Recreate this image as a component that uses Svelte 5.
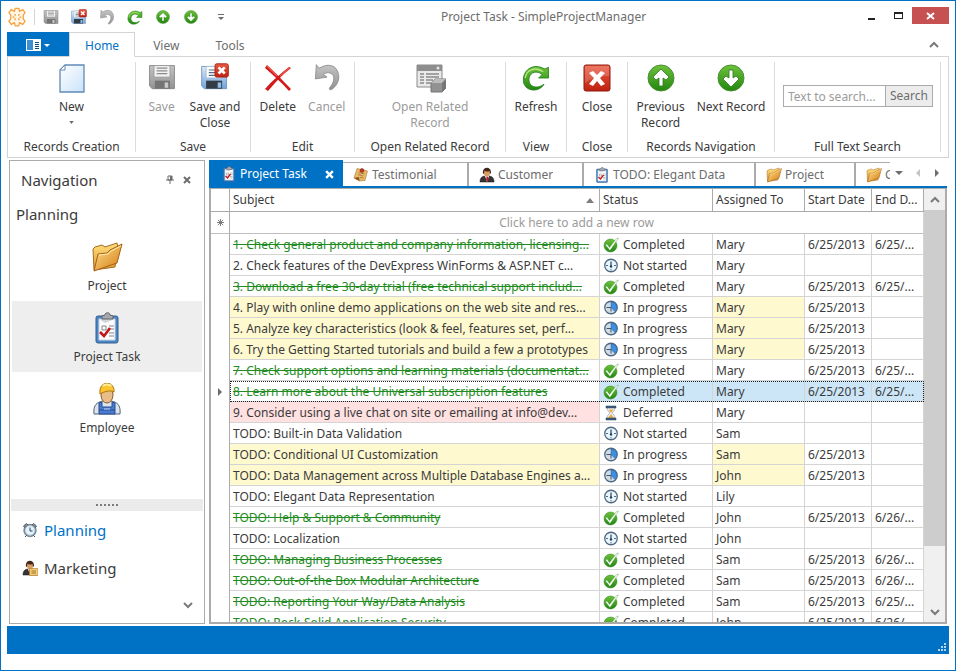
<script>
  const quickActions = [
    { icon: 'save', label: 'Save' },
    { icon: 'saveClose', label: 'Save and Close' },
    { icon: 'undo', label: 'Cancel' },
    { icon: 'refresh', label: 'Refresh' },
    { icon: 'up', label: 'Previous Record' },
    { icon: 'down', label: 'Next Record' }
  ];

  const ribbonGroups = [
    { id: 'creation', caption: 'Records Creation', items: [{ icon: 'doc', label: 'New', menu: true }] },
    {
      id: 'saving',
      caption: 'Save',
      items: [
        { icon: 'save', label: 'Save', disabled: true },
        { icon: 'saveClose', label: 'Save and\nClose' }
      ]
    },
    {
      id: 'edit',
      caption: 'Edit',
      items: [
        { icon: 'remove', label: 'Delete' },
        { icon: 'undo', label: 'Cancel', disabled: true }
      ]
    },
    {
      id: 'related',
      caption: 'Open Related Record',
      items: [{ icon: 'related', label: 'Open Related\nRecord', disabled: true }]
    },
    { id: 'view', caption: 'View', items: [{ icon: 'refresh', label: 'Refresh' }] },
    { id: 'closing', caption: 'Close', items: [{ icon: 'close', label: 'Close' }] },
    {
      id: 'records',
      caption: 'Records Navigation',
      items: [
        { icon: 'up', label: 'Previous\nRecord' },
        { icon: 'down', label: 'Next Record' }
      ]
    }
  ];

  const navItems = [
    { icon: 'folder', label: 'Project' },
    { icon: 'clipboard', label: 'Project Task' },
    { icon: 'worker', label: 'Employee' }
  ];

  const documents = [
    { id: 'testimonial', icon: 'note', label: 'Testimonial' },
    { id: 'customer', icon: 'person', label: 'Customer' },
    { id: 'todo', icon: 'clipboard', label: 'TODO: Elegant Data' },
    { id: 'project', icon: 'folder', label: 'Project' },
    { id: 'last', icon: 'folder', label: 'G' }
  ];

  const statuses = {
    done: { icon: 'check', label: 'Completed' },
    idle: { icon: 'clock', label: 'Not started' },
    progress: { icon: 'pie', label: 'In progress' },
    deferred: { icon: 'hourglass', label: 'Deferred' }
  };

  const tasks = [
    ['1. Check general product and company information, licensing...', 'done', 'Mary', '6/25/2013', '6/25/...'],
    ['2. Check features of the DevExpress WinForms & ASP.NET c...', 'idle', 'Mary', '', ''],
    ['3. Download a free 30-day trial (free technical support includ...', 'done', 'Mary', '6/25/2013', '6/25/...'],
    ['4. Play with online demo applications on the web site and res...', 'progress', 'Mary', '6/25/2013', ''],
    ['5. Analyze key characteristics (look & feel, features set, perf...', 'progress', 'Mary', '6/25/2013', ''],
    ['6. Try the Getting Started tutorials and build a few a prototypes', 'progress', 'Mary', '6/25/2013', ''],
    ['7. Check support options and learning materials (documentat...', 'done', 'Mary', '6/25/2013', '6/25/...'],
    ['8. Learn more about the Universal subscription features', 'done', 'Mary', '6/25/2013', '6/25/...'],
    ['9. Consider using a live chat on site or emailing at info@dev...', 'deferred', 'Mary', '', ''],
    ['TODO: Built-in Data Validation', 'idle', 'Sam', '', ''],
    ['TODO: Conditional UI Customization', 'progress', 'Sam', '6/25/2013', ''],
    ['TODO: Data Management across Multiple Database Engines a...', 'progress', 'John', '6/25/2013', ''],
    ['TODO: Elegant Data Representation', 'idle', 'Lily', '', ''],
    ['TODO: Help & Support & Community', 'done', 'John', '6/25/2013', '6/26/...'],
    ['TODO: Localization', 'idle', 'John', '', ''],
    ['TODO: Managing Business Processes', 'done', 'Sam', '6/25/2013', '6/26/...'],
    ['TODO: Out-of-the Box Modular Architecture', 'done', 'Sam', '6/25/2013', '6/26/...'],
    ['TODO: Reporting Your Way/Data Analysis', 'done', 'Sam', '6/25/2013', '6/25/...'],
    ['TODO: Rock-Solid Application Security', 'done', 'John', '6/25/2013', '6/26/...']
  ].map(([subject, status, owner, start, end]) => ({ subject, status, owner, start, end }));

  let activeNav = $state('Project Task');
  let selected = $state(7);
  let search = $state('');
</script>

{#snippet icon(name, box = '0 0 32 32')}
  <svg class="icon" viewBox={box} aria-hidden="true">
    {#if name === 'save'}
      <path d="M2 3h28v26H5l-3-3z" fill="url(#g-gray)" stroke="#858585" />
      <path d="M7 3h18v13H7z" fill="#f1f1f1" stroke="#999" />
      <path d="M10 6h12M10 9h12M10 12h12" stroke="#8c8c8c" stroke-width="1.4" />
      <path d="M8 20h17v9H8z" fill="#747474" />
      <path d="M19 22h4v6h-4z" fill="#c9c9c9" />
    {:else if name === 'saveClose'}
      <path d="M1 4h28v25H4l-3-3z" fill="url(#g-blue)" stroke="#7293b8" />
      <path d="M6 4h18v13H6z" fill="#fff" stroke="#a8bbd0" />
      <path d="M9 8h10M9 11h10M9 14h10" stroke="#5b6b7d" stroke-width="1.4" />
      <path d="M6 20h18v9H6z" fill="#333b44" />
      <path d="M19 22h4v6h-4z" fill="#8fbbe8" />
      <rect x="16" y="1" width="15" height="15" rx="2" fill="url(#g-red)" stroke="#a32014" />
      <path d="M20 5l7 7M27 5l-7 7" stroke="#fff" stroke-width="3" />
    {:else if name === 'undo'}
      <path d="M4 2l3 4c10-6 20-4 22 7 1 7-2 13-8 17-2 1-3-1-2-2 5-6 6-12 3-15-3-3-8-2-10 0l4 3-13 2z" fill="url(#g-gray)" stroke="#8d8d8d" />
    {:else if name === 'refresh'}
      <path d="M29 4v12H18l4-4c-8-6-15-1-15 6 0 8 9 11 17 5-5 9-20 9-23-2C-1 8 11-2 25 6z" fill="url(#g-green)" stroke="#24811c" transform="translate(1 1)" />
      <path d="M4 17c1-10 12-13 20-7" fill="none" stroke="#b8e67f" stroke-width="1.5" />
    {:else if name === 'up' || name === 'down'}
      <circle cx="16" cy="16" r="13" fill="url(#g-green)" stroke="#4a8f2f" />
      <path
        d="M16 7l8 8-3 3-3-2v8h-4v-8l-3 2-3-3z"
        fill="#fff"
        stroke="#2b7a1b"
        stroke-width=".8"
        transform={name === 'down' ? 'rotate(180 16 16)' : undefined}
      />
    {:else if name === 'doc'}
      <path d="M9 3h19v27H4V8z" fill="url(#g-paper)" stroke="#6289b5" stroke-width="1.3" />
      <path d="M4 8h5V3z" fill="#fff" stroke="#6289b5" />
    {:else if name === 'remove'}
      <path d="M5 3c8 7 15 15 24 24l-2 2C19 20 11 13 3 6z" fill="#d31919" />
      <path d="M27 5l2 1C20 13 14 20 6 29l-3-2C11 18 19 11 27 5z" fill="#d31919" />
      <path d="M5 4l10 10M27 6L18 14" stroke="#f05a50" stroke-width="1.2" />
    {:else if name === 'related'}
      <path d="M3 3h25v22H3z" fill="#e9e9e9" stroke="#8b8b8b" />
      <path d="M3 3h25v6H3z" fill="#8e8e8e" />
      <circle cx="24" cy="6" r="1.5" fill="#e6e6e6" />
      <path d="M6 12h4M6 15h4M6 18h4M6 21h4M12 12h13M12 15h13M12 18h7M12 21h5" stroke="#8a8a8a" stroke-width="1.3" />
      <path d="M17 21l4-4h11v9l-4 4H17z" fill="#929292" stroke="#777" />
      <path d="M17 21l4-4h11l-4 4z" fill="#bcbcbc" />
      <path d="M28 21l4-4v9l-4 4z" fill="#767676" />
    {:else if name === 'close'}
      <rect x="3" y="3" width="26" height="26" rx="2" fill="url(#g-red)" stroke="#8f1a10" />
      <path d="M4 4h24v10c-9 0-17 2-24 7z" fill="#fff" opacity=".18" />
      <path d="M12 9l4 4 4-4 4 2-5 5 5 6-4 2-4-5-4 5-4-2 5-6-5-5z" fill="#fff" />
    {:else if name === 'folder'}
      <path d="M3 29L2 8l2-2 7-2 3 2 12-4 1 5-3 19z" fill="url(#g-folder)" stroke="#a66b20" />
      <path d="M3 30l4-17 9-1 3-3 12-6-5 19z" fill="url(#g-folderFront)" stroke="#a55f18" />
      <path d="M8 14l9-1 3-3 10-5" fill="none" stroke="#fff0af" />
    {:else if name === 'clipboard'}
      <rect x="5" y="4" width="22" height="27" rx="2" fill="#4f86c4" stroke="#315f95" />
      <path d="M8 7h16v21H8z" fill="#fcfcfc" stroke="#c9d7e8" />
      <path d="M8 7h16l-10 4z" fill="#d2d5da" />
      <path d="M11 7V4l3-1c0-3 5-3 5 0l3 1v3z" fill="#a5a9ad" stroke="#5d6268" />
      <path d="M11 14h4v4h-4zM18 14h5M18 17h5M18 21h5M18 24h5" fill="none" stroke="#878787" />
      <path d="M9 20l4 4 6-8" fill="none" stroke="#c1151b" stroke-width="2.6" />
    {:else if name === 'worker'}
      <path d="M3 31c-1-9 3-12 9-13h8c6 1 10 4 9 13z" fill="#dce3ea" stroke="#50637a" />
      <path d="M8 31V20l3-1v5h10v-5l3 1v11z" fill="#4a7bd0" stroke="#254d92" />
      <path d="M8 27h16" stroke="#254d92" />
      <path d="M13 26h6" stroke="#c2d8fa" />
      <ellipse cx="16" cy="12" rx="6" ry="8" fill="#e8bd88" stroke="#8a5b2b" />
      <path d="M9 11C7-3 24-3 23 9c-3-2-9-1-14 2z" fill="#fbc530" stroke="#ab7610" />
      <path d="M12 3c2-2 6-2 8 0" fill="none" stroke="#fff0a0" stroke-width="2" />
    {:else if name === 'note'}
      <path d="M8 3l21 5-5 19-11 1-11-6z" fill="#e8ba68" stroke="#9b6524" />
      <path d="M2 22l10-2 1 8z" fill="#8b521e" />
      <path d="M11 11l12 3M10 15l10 3M14 21l7 1" stroke="#9f7038" stroke-width="1.6" />
      <circle cx="18" cy="7" r="4" fill="#c53323" stroke="#812015" />
    {:else if name === 'person' || name === 'marketing'}
      <path d="M2 30c0-8 3-11 10-12h8c7 1 10 4 10 12z" fill="#363334" stroke="#171516" />
      <path d="M12 18h8l-4 12z" fill="#fff" />
      <path d="M15 19h3l1 6-3 5-2-5z" fill="#bd2329" />
      <ellipse cx="16" cy="11" rx="6" ry="8" fill="#d99c62" />
      <path d="M8 13C5-1 25-3 24 12l-2 2-1-6c-4 2-8 1-10-1l-1 7z" fill="#44271a" />
      {#if name === 'marketing'}
        <path d="M15 17h17v14H15z" fill="#f8ca6b" stroke="#9b6824" />
        <path d="M19 22h9M19 26h9" stroke="#7a6234" stroke-width="1.6" />
      {/if}
    {:else if name === 'alarm'}
      <path d="M3 8l6-5 3 3-6 6zM29 8l-6-5-3 3 6 6zM6 30l5-5M26 30l-5-5" fill="#9aa0a5" stroke="#4c5359" stroke-width="2" />
      <circle cx="16" cy="17" r="12.5" fill="#8a9aa8" stroke="#344858" />
      <circle cx="16" cy="17" r="9.5" fill="#e3f2fc" stroke="#b5ccda" />
      <path d="M16 11v7h5" fill="none" stroke="#27475f" stroke-width="2" />
    {:else if name === 'check'}
      <circle cx="15" cy="17" r="13" fill="url(#g-green)" stroke="#268016" />
      <path d="M8 14l5 7L27 3l4-1-17 25-9-11z" fill="#fff" stroke="#4d9d3a" stroke-width=".8" />
    {:else if name === 'clock' || name === 'pie'}
      <circle cx="16" cy="15" r="12.5" fill={name === 'pie' ? '#d3dce5' : '#eaf4fb'} stroke="#4e6883" stroke-width="2.6" />
      {#if name === 'pie'}
        <path d="M16 15V4a11 11 0 0 1 8 19z" fill="#3b91df" stroke="#245b9b" />
        <path d="M16 15H7M16 15v8" stroke="#40566d" stroke-width="2" />
      {:else}
        <path d="M16 7v10" stroke="#1f4664" stroke-width="2.4" />
        <circle cx="16" cy="17" r="2.4" fill="#1f4664" />
        <path d="M6 15h4M22 15h4M16 22v3" stroke="#536d83" stroke-width="2" />
      {/if}
    {:else if name === 'hourglass'}
      <path d="M8 5h16c0 6-3 8-6 11 3 3 6 5 6 11H8c0-6 3-8 6-11-3-3-6-5-6-11z" fill="#edf4f9" stroke="#73818d" />
      <path d="M11 9h10l-5 7zM16 18l6 8H10z" fill="#efa83e" />
      <path d="M6 2h20v4H6zM6 26h20v4H6z" fill="#3e5d82" stroke="#273d59" />
    {:else if name === 'app'}
      <path
        d="M13 2h6l1 5 5-3 4 5-3 4v6l3 4-4 5-5-3-1 5h-6l-1-5-5 3-4-5 3-4v-6l-3-4 4-5 5 3z"
        fill="#fff6e6"
        stroke="#f6a13a"
        stroke-width="2"
        stroke-linejoin="round"
      />
      <path d="M13 11v3M13 18v3M19 11v3M19 18v3M9 16h3M20 16h3" fill="none" stroke="#f39a2c" stroke-width="2" />
    {/if}
  </svg>
{/snippet}

{#snippet chevron(dir)}
  <svg class="chevron" viewBox="0 0 10 8" aria-hidden="true">
    <path d={dir === 'up' ? 'M1 6l4-4 4 4' : 'M1 2l4 4 4-4'} />
  </svg>
{/snippet}

<svg class="defs" aria-hidden="true">
  <defs>
    <linearGradient id="g-gray" x2="0" y2="1"><stop stop-color="#c4c4c4" /><stop offset="1" stop-color="#929292" /></linearGradient>
    <linearGradient id="g-blue" x2="0" y2="1"><stop stop-color="#dbeafa" /><stop offset="1" stop-color="#6fa3dc" /></linearGradient>
    <linearGradient id="g-paper" x2="1" y2="1"><stop stop-color="#fff" /><stop offset="1" stop-color="#c9e2fa" /></linearGradient>
    <linearGradient id="g-red" x2="0" y2="1"><stop stop-color="#ea5a42" /><stop offset="1" stop-color="#bf2110" /></linearGradient>
    <linearGradient id="g-green" x2="0" y2="1"><stop stop-color="#6ec23d" /><stop offset="1" stop-color="#21860f" /></linearGradient>
    <linearGradient id="g-folder" x2="0" y2="1"><stop stop-color="#ffe07e" /><stop offset="1" stop-color="#e09b32" /></linearGradient>
    <linearGradient id="g-folderFront" x2="1" y2="1"><stop stop-color="#ffe391" /><stop offset="1" stop-color="#d57a10" /></linearGradient>
  </defs>
</svg>

<div class="window">
  <header class="title-bar">
    <div class="logo">{@render icon('app')}</div>
    <div class="quick">
      {#each quickActions as action}
        <button type="button" aria-label={action.label}>{@render icon(action.icon)}</button>
      {/each}
      <button type="button" class="quick-more" aria-label="Customize toolbar">
        <svg viewBox="0 0 6 6" width="6" height="6"><path d="M0 0h6v1H0zM0 3h6L3 6z" fill="#6d6d6d" /></svg>
      </button>
    </div>
    <h1>Project Task - SimpleProjectManager</h1>
    <div class="window-buttons">
      <button type="button" aria-label="Minimize">
        <svg viewBox="0 0 10 10" width="10" height="10"><path d="M1 7h7v2H1z" fill="#222" /></svg>
      </button>
      <button type="button" aria-label="Maximize">
        <svg viewBox="0 0 10 10" width="10" height="10"><path d="M0 1h9v7H0zM1 3v4h7V3z" fill="#222" fill-rule="evenodd" /></svg>
      </button>
      <button type="button" class="quit" aria-label="Close window">
        <svg viewBox="0 0 10 10" width="10" height="10"><path d="M1 2l7 6M8 2L1 8" stroke="#fff" stroke-width="2" /></svg>
      </button>
    </div>
  </header>

  <nav class="ribbon-tabs">
    <button type="button" class="file" aria-label="Application menu">
      <svg viewBox="0 0 26 14" width="26" height="14">
        <path d="M1 1h15v12H1z" fill="#fff" />
        <path d="M2 2h6v10H2z" fill="#3d8fd0" />
        <path d="M10 4h4M10 6h4M10 8h4M10 10h4" stroke="#0c4d80" transform="translate(0 .5)" />
        <path d="M19 6h6l-3 3z" fill="#fff" />
      </svg>
    </button>
    <button type="button" class="ribbon-tab active">Home</button>
    <button type="button" class="ribbon-tab">View</button>
    <button type="button" class="ribbon-tab">Tools</button>
    <button type="button" class="collapse" aria-label="Collapse ribbon">{@render chevron('up')}</button>
  </nav>

  <section class="ribbon">
    {#each ribbonGroups as group}
      <div class="group {group.id}">
        <div class="group-items">
          {#each group.items as item}
            <button type="button" class="command" disabled={item.disabled}>
              {@render icon(item.icon, ['save', 'saveClose', 'undo', 'refresh'].includes(item.icon) ? '-2 -1 36 36' : undefined)}
              <span>{item.label}</span>
              {#if item.menu}
                <svg class="menu-arrow" viewBox="0 0 6 4" width="5" height="3"><path d="M0 0h6L3 4z" fill="#6d6d6d" /></svg>
              {/if}
            </button>
          {/each}
        </div>
        <div class="caption">{group.caption}</div>
      </div>
    {/each}
    <div class="group full-text">
      <form class="search" onsubmit={(e) => e.preventDefault()}>
        <input type="text" aria-label="Text to search" placeholder="Text to search..." bind:value={search} />
        <button type="submit">Search</button>
      </form>
      <div class="caption">Full Text Search</div>
    </div>
  </section>

  <main class="workspace">
    <aside class="nav-panel">
      <div class="nav-title">
        <h2>Navigation</h2>
        <button type="button" aria-label="Pin panel">
          <svg viewBox="0 0 8 10" width="8" height="10"><path d="M2 1h4v4H2zM0 5h8M4 5v4" fill="none" stroke="#6d6d6d" /><path d="M4 1h2v4H4z" fill="#6d6d6d" /></svg>
        </button>
        <button type="button" aria-label="Close panel">
          <svg viewBox="0 0 8 8" width="8" height="8"><path d="M1 1l6 6M7 1L1 7" stroke="#6d6d6d" stroke-width="2" /></svg>
        </button>
      </div>
      <h3>Planning</h3>
      <div class="nav-items">
        {#each navItems as item}
          <button
            type="button"
            class="nav-item"
            class:active={item.label === activeNav}
            onclick={() => (activeNav = item.label)}
          >
            {@render icon(item.icon)}
            <span>{item.label}</span>
          </button>
        {/each}
      </div>
      <div class="splitter"><i></i><i></i><i></i><i></i><i></i><i></i></div>
      <button type="button" class="nav-group current">{@render icon('alarm')}Planning</button>
      <button type="button" class="nav-group">{@render icon('marketing')}Marketing</button>
      <button type="button" class="nav-more" aria-label="More groups">{@render chevron('down')}</button>
    </aside>

    <section class="documents">
      <div class="doc-tabs">
        <div class="doc-tab active">
          {@render icon('clipboard')}
          <span>Project Task</span>
          <button type="button" aria-label="Close tab">
            <svg viewBox="0 0 8 8" width="9" height="9"><path d="M1 1l6 6M7 1L1 7" stroke="#fff" stroke-width="2" /></svg>
          </button>
        </div>
        {#each documents as doc}
          <button type="button" class="doc-tab {doc.id}">
            {@render icon(doc.icon)}
            <span>{doc.label}</span>
          </button>
        {/each}
        <div class="tab-controls">
          <button type="button" aria-label="Tab list"><svg viewBox="0 0 8 8" width="8" height="8"><path d="M0 2h8L4 6z" fill="#6d6d6d" /></svg></button>
          <button type="button" aria-label="Scroll tabs left"><svg viewBox="0 0 8 8" width="8" height="8"><path d="M6 0v8L2 4z" fill="#c4c4c4" /></svg></button>
          <button type="button" aria-label="Scroll tabs right"><svg viewBox="0 0 8 8" width="8" height="8"><path d="M2 0v8l4-4z" fill="#6d6d6d" /></svg></button>
        </div>
      </div>

      <div class="grid">
        <div class="grid-view">
          <table>
            <colgroup>
              <col class="col-mark" />
              <col />
              <col class="col-status" />
              <col class="col-owner" />
              <col class="col-start" />
              <col class="col-end" />
            </colgroup>
            <thead>
              <tr>
                <th aria-label="Row marker"></th>
                <th>
                  <div class="sorted">
                    Subject
                    <svg viewBox="0 0 8 5" width="8" height="5"><path d="M0 5h8L4 0z" fill="#7d7d7d" /></svg>
                  </div>
                </th>
                <th>Status</th>
                <th>Assigned To</th>
                <th>Start Date</th>
                <th>End D...</th>
              </tr>
            </thead>
            <tbody>
              <tr class="new-row">
                <td class="mark">
                  <svg viewBox="0 0 8 8" width="7" height="7"><path d="M4 0v8M0 4h8M1 1l6 6M7 1L1 7" stroke="#6d6d6d" /></svg>
                </td>
                <td colspan="5">Click here to add a new row</td>
              </tr>
              {#each tasks as task, i}
                <tr class={task.status} class:selected={i === selected} onclick={() => (selected = i)}>
                  <td class="mark">
                    {#if i === selected}
                      <svg viewBox="0 0 4 8" width="4" height="8"><path d="M0 0v8l4-4z" fill="#6d6d6d" /></svg>
                    {/if}
                  </td>
                  <td class="subject">{task.subject}</td>
                  <td>
                    <div class="status">{@render icon(statuses[task.status].icon)}{statuses[task.status].label}</div>
                  </td>
                  <td class="owner">{task.owner}</td>
                  <td>{task.start}</td>
                  <td>{task.end}</td>
                </tr>
              {/each}
            </tbody>
          </table>
        </div>
        <div class="scrollbar">
          <button type="button" aria-label="Scroll up">{@render chevron('up')}</button>
          <div class="track"><div class="thumb"></div></div>
          <button type="button" aria-label="Scroll down">{@render chevron('down')}</button>
        </div>
      </div>
    </section>
  </main>

  <footer class="status-bar">
    <svg viewBox="0 0 8 8" width="8" height="8"><path d="M6 0h2v2H6zM6 3h2v2H6zM3 3h2v2H3zM6 6h2v2H6zM3 6h2v2H3zM0 6h2v2H0z" fill="#b9d3e8" /></svg>
  </footer>
</div>

<style>
  :global(body) {
    margin: 0;
  }

  .window {
    box-sizing: border-box;
    display: flex;
    flex-direction: column;
    height: 100vh;
    padding: 0 6px 16px;
    border: 1px solid #0072c6;
    overflow: hidden;
    color: #3b3b3b;
    background: #ffffff;
    font-family: 'Noto Sans', Tahoma, sans-serif;
    font-size: 12px;
    line-height: 16px;
  }

  .defs {
    position: absolute;
    width: 0;
    height: 0;
  }

  button {
    display: flex;
    align-items: center;
    justify-content: center;
    padding: 0;
    border: 0;
    color: inherit;
    background: none;
    font: inherit;
  }

  h1,
  h2,
  h3 {
    margin: 0;
    font-weight: 400;
  }

  .icon {
    display: block;
    flex: none;
    width: 16px;
    height: 16px;
  }

  .chevron {
    width: 10px;
    height: 8px;
    fill: none;
    stroke: #7a7a7a;
    stroke-width: 2;
  }

  .title-bar {
    display: flex;
    flex: none;
    align-items: center;
    height: 31px;
  }

  .logo .icon {
    width: 20px;
    height: 20px;
  }

  .quick {
    display: flex;
    margin-left: 7px;
    padding-left: 2px;
    border-left: 1px solid #d4d4d4;
  }

  .quick button {
    width: 28px;
    height: 16px;
  }

  .quick .quick-more {
    width: 32px;
  }

  .title-bar h1 {
    flex: 1;
    padding-right: 8px;
    color: #6d6d6d;
    font-size: 12px;
    text-align: center;
  }

  .window-buttons {
    display: flex;
    align-self: flex-start;
    padding-top: 6px;
  }

  .window-buttons button {
    width: 27px;
    height: 17px;
  }

  .window-buttons .quit {
    width: 37px;
    background: #c75050;
  }

  .ribbon-tabs {
    display: flex;
    flex: none;
    height: 25px;
    margin-bottom: -1px;
  }

  .file {
    width: 62px;
    background: #0072c6;
  }

  .ribbon-tab {
    padding: 2px 17px 0;
    border: 1px solid transparent;
    color: #6d6d6d;
    font-size: 12px;
  }

  .ribbon-tab.active {
    z-index: 1;
    padding: 2px 15px 0;
    border-color: #d4d4d4;
    border-bottom-color: #ffffff;
    color: #0072c6;
    background: #ffffff;
  }

  .collapse {
    width: 30px;
    margin-left: auto;
  }

  .ribbon {
    display: flex;
    flex: none;
    height: 90px;
    padding: 5px 0;
    border: 1px solid #d4d4d4;
  }

  .group {
    display: flex;
    flex-direction: column;
    box-sizing: border-box;
    width: 61px;
    border-right: 1px solid #dcdcdc;
  }

  .group.creation {
    width: 128px;
  }

  .group.saving {
    width: 115px;
  }

  .group.edit {
    width: 104px;
  }

  .group.related {
    width: 151px;
  }

  .group.records {
    width: 147px;
  }

  .group.full-text {
    flex: 1;
    margin-right: 7px;
  }

  .group-items {
    display: flex;
    flex: 1;
    justify-content: center;
  }

  .command {
    flex-direction: column;
    justify-content: flex-start;
    padding: 0 6px;
    line-height: 16px;
  }

  .command .icon {
    width: 32px;
    height: 32px;
    margin-bottom: 5px;
  }

  .command span {
    white-space: pre;
  }

  .command:disabled {
    color: #9b9b9b;
  }

  .command .menu-arrow {
    margin-top: 6px;
  }

  .caption {
    flex: none;
    height: 14px;
    line-height: 18px;
    text-align: center;
    white-space: nowrap;
  }

  .search {
    display: flex;
    flex: 1;
    align-items: center;
    padding: 0 7px 8px 8px;
  }

  .search input {
    box-sizing: border-box;
    flex: 1;
    min-width: 0;
    height: 22px;
    padding: 0 4px;
    border: 1px solid #ababab;
    border-right: 0;
    outline: 0;
    color: #3b3b3b;
    font: inherit;
  }

  .search input::placeholder {
    color: #9b9b9b;
    opacity: 1;
  }

  .search button {
    height: 22px;
    padding: 0 4px;
    border: 1px solid #ababab;
    color: #6d6d6d;
    background: #ececec;
  }

  .workspace {
    display: flex;
    flex: 1;
    min-height: 0;
    gap: 4px;
    padding: 2px;
  }

  .nav-panel {
    display: flex;
    flex: none;
    flex-direction: column;
    box-sizing: border-box;
    width: 196px;
    padding: 0 1px;
    border: 1px solid #ababab;
  }

  .nav-title {
    display: flex;
    align-items: center;
    gap: 9px;
    height: 38px;
    padding: 0 12px 0 10px;
  }

  .nav-title h2 {
    flex: 1;
    font-size: 15px;
  }

  .nav-panel h3 {
    padding: 0 5px;
    font-size: 15px;
    line-height: 30px;
  }

  .nav-items {
    flex: 1;
    padding: 1px 1px 0;
  }

  .nav-item {
    flex-direction: column;
    gap: 5px;
    width: 100%;
    height: 71px;
    padding-top: 3px;
  }

  .nav-item.active {
    background: #eeeeee;
  }

  .nav-item .icon {
    width: 32px;
    height: 32px;
  }

  .splitter {
    display: flex;
    flex: none;
    align-items: center;
    justify-content: center;
    gap: 2px;
    height: 12px;
    background: #ebebeb;
  }

  .splitter i {
    width: 2px;
    height: 2px;
    background: #7d7d7d;
  }

  .nav-group {
    flex: none;
    justify-content: flex-start;
    gap: 6px;
    height: 38px;
    padding: 0 11px;
    font-size: 15px;
  }

  .nav-group.current {
    color: #0072c6;
  }

  .nav-more {
    align-self: flex-end;
    width: 30px;
    height: 36px;
  }

  .documents {
    display: flex;
    flex: 1;
    flex-direction: column;
    min-width: 0;
  }

  .doc-tabs {
    display: flex;
    flex: none;
    align-items: flex-end;
    height: 26px;
    border-bottom: 2px solid #0072c6;
  }

  .doc-tab {
    display: flex;
    flex: none;
    align-items: center;
    justify-content: flex-start;
    gap: 3px;
    box-sizing: border-box;
    height: 24px;
    padding: 0 10px;
    border-top: 1px solid #ababab;
    border-right: 2px solid #ababab;
    overflow: hidden;
    color: #6d6d6d;
    white-space: nowrap;
  }

  .doc-tab span {
    overflow: hidden;
  }

  .doc-tab.active {
    width: 134px;
    height: 26px;
    padding: 2px 9px 0 12px;
    border: 0;
    color: #ffffff;
    background: #0072c6;
  }

  .doc-tab.active span {
    flex: 1;
  }

  .testimonial {
    width: 126px;
  }

  .customer {
    width: 115px;
  }

  .todo {
    width: 172px;
  }

  .project {
    width: 100px;
  }

  .last {
    flex: 1;
    min-width: 0;
    padding-right: 0;
    border-right: 0;
  }

  .tab-controls {
    display: flex;
    flex: none;
    gap: 11px;
    align-self: center;
    padding: 0 6px 0 5px;
  }

  .grid {
    display: flex;
    flex: 1;
    min-height: 0;
    border: solid #ababab;
    border-width: 1px 2px 2px;
  }

  .grid-view {
    flex: 1;
    min-width: 0;
    overflow: hidden;
  }

  table {
    width: 100%;
    table-layout: fixed;
    border-collapse: separate;
    border-spacing: 0;
  }

  .col-mark {
    width: 19px;
  }

  .col-status {
    width: 113px;
  }

  .col-owner {
    width: 92px;
  }

  .col-start {
    width: 67px;
  }

  .col-end {
    width: 52px;
  }

  th,
  td {
    box-sizing: border-box;
    height: 21px;
    padding: 1px 3px 0;
    border-right: 1px solid #d4d4d4;
    border-bottom: 1px solid #d4d4d4;
    overflow: hidden;
    font-weight: 400;
    text-align: left;
    text-overflow: ellipsis;
    white-space: nowrap;
  }

  th {
    height: 23px;
    padding-top: 0;
    border-color: #ababab;
  }

  .sorted {
    display: flex;
    align-items: center;
    justify-content: space-between;
    padding-right: 2px;
  }

  .new-row td {
    height: 22px;
    border-bottom-color: #c0c0c0;
    color: #9b9b9b;
    text-align: center;
  }

  td.mark {
    padding: 0;
    border-right-color: #ababab;
    text-align: center;
  }

  .mark svg {
    display: block;
    margin: 0 auto;
  }

  tr:not(.new-row) .mark {
    border-bottom: 0;
  }

  .status {
    display: flex;
    align-items: center;
    gap: 4px;
  }

  .done .subject {
    color: #228b22;
    text-decoration: line-through;
  }

  .progress .subject,
  .progress .owner {
    background: #fff9d0;
  }

  .deferred .subject {
    background: #ffe1e1;
  }

  .selected {
    position: relative;
  }

  .selected td:not(.mark, .subject) {
    background: #cde6f7;
  }

  /* focus rectangle over the row, beside the marker column */
  .selected .subject::after {
    content: '';
    position: absolute;
    inset: 0 0 0 19px;
    border: 1px dotted #222222;
    pointer-events: none;
  }

  .scrollbar {
    display: flex;
    flex: none;
    flex-direction: column;
    width: 21px;
    background: #f0f0f0;
  }

  .scrollbar button {
    height: 21px;
  }

  .track {
    flex: 1;
  }

  .thumb {
    height: 86%;
    background: #cdcdcd;
  }

  .status-bar {
    display: flex;
    flex: none;
    align-items: flex-end;
    justify-content: flex-end;
    box-sizing: border-box;
    height: 28px;
    padding: 3px;
    background: #0072c6;
  }
</style>
